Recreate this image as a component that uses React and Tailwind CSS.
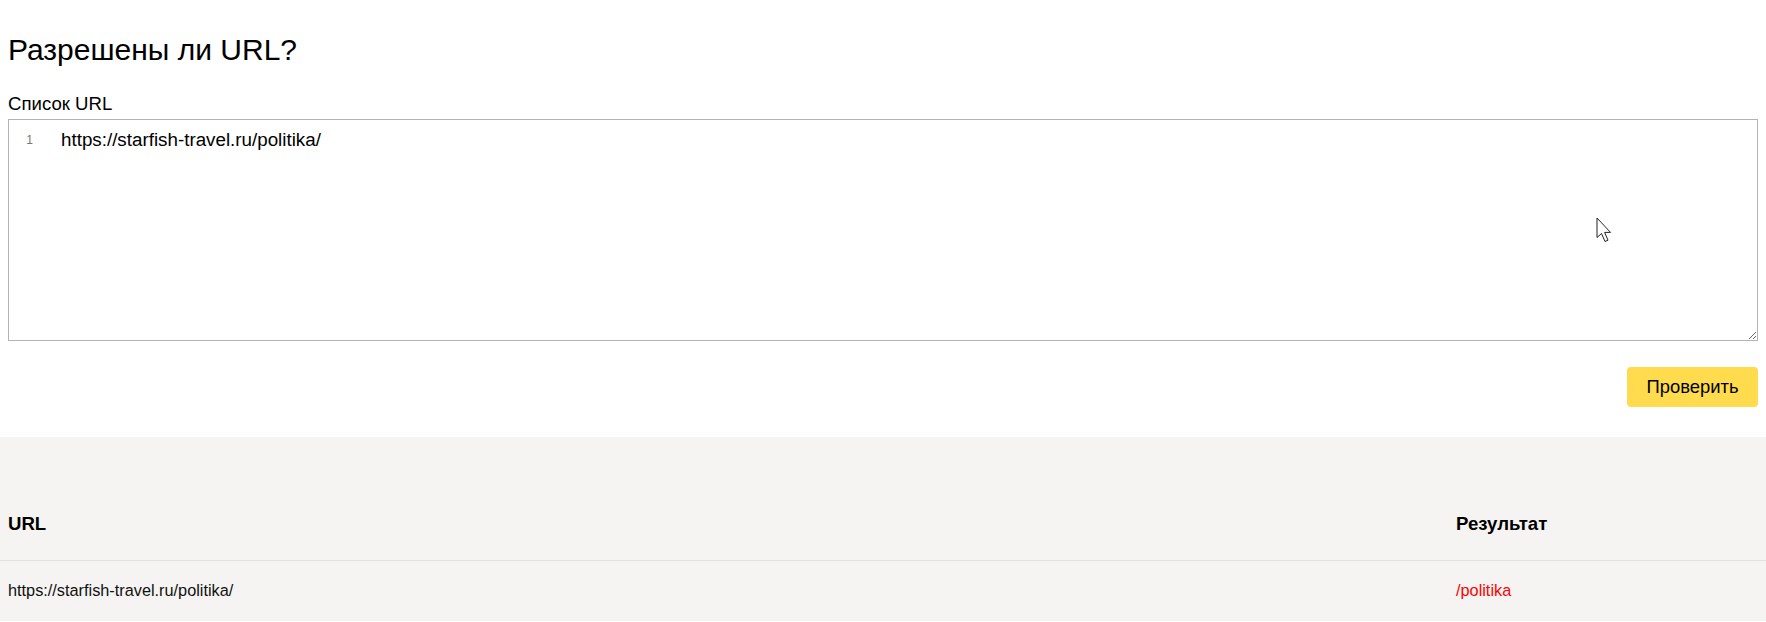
import { useState } from 'react';

const font = { fontFamily: '"Liberation Sans", Arial, sans-serif' };

const Cursor = () => (
    <svg
        className="absolute left-[1596px] top-[217px] pointer-events-none"
        width="17"
        height="27"
        viewBox="0 0 17 27"
    >
        <path
            d="M1 1 L1 20.5 L5.5 16.5 L9 24.5 L12 23.2 L8.6 15.4 L14.5 15.4 Z"
            fill="#fff"
            stroke="#222"
            strokeWidth="1"
            strokeLinejoin="miter"
        />
    </svg>
);

const App = () => {
    const [urls, setUrls] = useState('https://starfish-travel.ru/politika/');
    const [results] = useState([
        { url: 'https://starfish-travel.ru/politika/', result: '/politika' }
    ]);

    return (
        <div className="relative bg-white text-black" style={font}>
            <section className="px-2 pt-[32px] pb-[30px]">
                <h1 className="text-[30px] leading-[36px] font-normal">Разрешены ли URL?</h1>

                <label className="block mt-[24px] text-[18.6px] leading-[24px]">Список URL</label>

                <div className="mt-[3px] flex h-[222px] border border-[#b3b3b3] bg-white">
                    <div className="w-[45px] shrink-0 pt-[12px] pr-[21px] text-right text-[12px] leading-[16px] text-[#777]">
                        1
                    </div>
                    <textarea
                        value={urls}
                        onChange={(e) => setUrls(e.target.value)}
                        spellCheck={false}
                        className="flex-1 resize-y outline-none border-0 pt-[8px] pl-[7px] text-[18.8px] leading-[24px] text-black bg-transparent"
                        style={font}
                    />
                </div>

                <div className="mt-[26px] flex justify-end">
                    <button className="h-[40px] w-[131px] rounded-[4px] bg-[#ffdb4d] text-[18.4px] leading-[24px] text-black">
                        Проверить
                    </button>
                </div>
            </section>

            <section className="bg-[#f5f4f2] h-[184px] pt-[75px]">
                <div className="flex px-2 pb-[24px] text-[18.6px] leading-[24px] font-bold">
                    <div className="w-[1448px]">URL</div>
                    <div className="flex-1">Результат</div>
                </div>
                <div className="border-t border-[#e2e1df]" />
                {results.map(r => (
                    <div key={r.url} className="flex px-2 pt-[17px] text-[16.3px] leading-[24px]">
                        <div className="w-[1448px] text-[#111]">{r.url}</div>
                        <div className="flex-1 text-[#f00]">{r.result}</div>
                    </div>
                ))}
            </section>

            <Cursor />
        </div>
    );
};

export default App;
